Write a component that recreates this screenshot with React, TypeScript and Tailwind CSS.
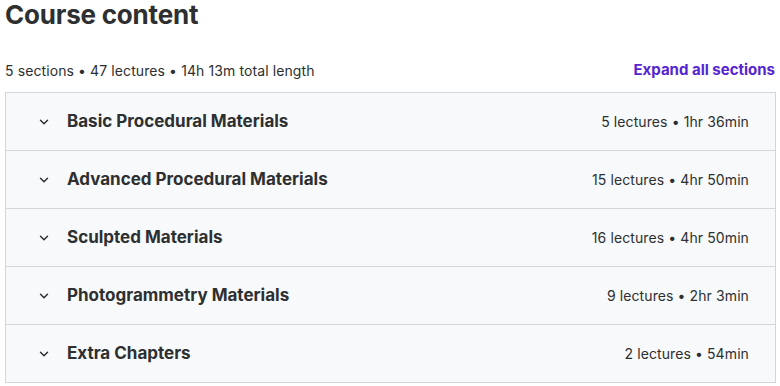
import { ChevronDown } from "lucide-react";

const sections = [
  { title: "Basic Procedural Materials", meta: "5 lectures • 1hr 36min" },
  { title: "Advanced Procedural Materials", meta: "15 lectures • 4hr 50min" },
  { title: "Sculpted Materials", meta: "16 lectures • 4hr 50min" },
  { title: "Photogrammetry Materials", meta: "9 lectures • 2hr 3min" },
  { title: "Extra Chapters", meta: "2 lectures • 54min" },
];

export default function App() {
  return (
    <div className="w-[780px] h-[386px] overflow-hidden bg-white font-['Inter',sans-serif] text-[#2d2f31]">
      <h2 className="px-[5px] text-[26px] font-bold leading-[30px] tracking-[-0.2px]">
        Course content
      </h2>
      <div className="flex items-center justify-between pl-[5px] pr-[5px] mt-[28px] h-[24px]">
        <span className="text-[14px] tracking-[0.1px]">5 sections • 47 lectures • 14h 13m total length</span>
        <button className="text-[15px] font-bold text-[#5624d0]">Expand all sections</button>
      </div>
      <div className="ml-[5px] mr-[4px] mt-[10px] border-t border-l border-r border-[#d1d7dc]">
        {sections.map((s, idx) => (
          <div
            key={idx}
            className="flex items-center justify-between h-[58px] bg-[#f7f9fa] border-b border-[#d1d7dc] pl-[31px] pr-[26px]"
          >
            <div className="flex items-center gap-[16px]">
              <ChevronDown className="w-[14px] h-[14px]" strokeWidth={2.5} />
              <span className="text-[17px] font-bold">{s.title}</span>
            </div>
            <span className="text-[14px] tracking-[0.1px]">{s.meta}</span>
          </div>
        ))}
      </div>
    </div>
  );
}
